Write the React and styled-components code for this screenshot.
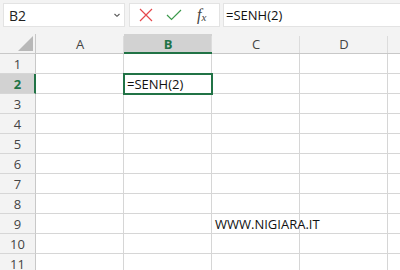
import React from "react";
import styled, { createGlobalStyle } from "styled-components";

const Global = createGlobalStyle`
  html, body { margin: 0; padding: 0; background: #ffffff; }
  body { width: 400px; height: 270px; overflow: hidden; }
  * { box-sizing: border-box; }
`;

const GREEN = "#217346";
const GRID = "#d6d6d6";
const HEAD_BG = "#f3f3f3";
const SEL_BG = "#d2d2d2";

const Page = styled.div`
  width: 400px;
  height: 270px;
  overflow: hidden;
  background: ${HEAD_BG};
  font-family: "Open Sans", "Noto Sans", sans-serif;
`;

const Toolbar = styled.div`
  height: 34px;
  display: flex;
  align-items: flex-start;
  padding: 3px 0 0 3px;
  gap: 4px;
`;

const NameBox = styled.div`
  width: 122px;
  height: 24px;
  background: #fff;
  border: 1px solid #e3e3e3;
  display: flex;
  align-items: center;
  justify-content: space-between;
  padding: 0 3px 0 5px;
  font-size: 14px;
  color: #222;
`;

const Buttons = styled.div`
  width: 91px;
  height: 24px;
  background: #fff;
  border: 1px solid #e3e3e3;
  display: flex;
  align-items: center;
  padding-left: 9px;
  gap: 13px;
`;

const Fx = styled.span`
  font-family: "Liberation Serif", "DejaVu Serif", serif;
  font-style: italic;
  font-size: 16px;
  color: #444;
  margin-left: 2px;
  line-height: 1;
  sub {
    font-size: 11px;
    vertical-align: baseline;
    position: relative;
    top: 1px;
  }
`;

const FormulaInput = styled.div`
  flex: 1;
  height: 24px;
  margin-left: -1px;
  background: #fff;
  border: 1px solid #e3e3e3;
  border-right: none;
  display: flex;
  align-items: center;
  padding-left: 2px;
  font-size: 13px;
  color: #111;
`;

const Sheet = styled.div`
  display: grid;
  grid-template-columns: 36px repeat(4, 88px) 1fr;
  grid-template-rows: 20px repeat(11, 20px);
  background: #fff;
`;

const Corner = styled.div`
  background: ${HEAD_BG};
  border-right: 1px solid #c8c8c8;
  border-bottom: 1px solid #c8c8c8;
  display: flex;
  align-items: flex-end;
  justify-content: flex-end;
  padding: 0 2px 2px 0;
`;

const ColHead = styled.div`
  background: ${(p) => (p.$sel ? SEL_BG : HEAD_BG)};
  border-bottom: ${(p) => (p.$sel ? `2px solid ${GREEN}` : "1px solid #c8c8c8")};
  position: relative;
  display: flex;
  align-items: center;
  justify-content: center;
  font-size: 13px;
  padding-top: ${(p) => (p.$sel ? "1px" : "0")};
  color: ${(p) => (p.$sel ? GREEN : "#444")};
  font-weight: ${(p) => (p.$sel ? 700 : 400)};
  &::after {
    content: "";
    position: absolute;
    right: 0;
    top: 2px;
    bottom: 0;
    width: 1px;
    background: #dcdcdc;
  }
`;

const RowHead = styled.div`
  background: ${(p) => (p.$sel ? SEL_BG : HEAD_BG)};
  border-right: ${(p) => (p.$sel ? `2px solid ${GREEN}` : "1px solid #c8c8c8")};
  border-bottom: 1px solid ${GRID};
  display: flex;
  align-items: center;
  justify-content: center;
  padding-left: ${(p) => (p.$sel ? "1px" : "0")};
  font-size: 13px;
  color: ${(p) => (p.$sel ? GREEN : "#444")};
  font-weight: ${(p) => (p.$sel ? 700 : 400)};
`;

const Cell = styled.div`
  border-right: 1px solid ${GRID};
  border-bottom: 1px solid ${GRID};
  position: relative;
  display: flex;
  align-items: center;
  padding-left: 3px;
  font-size: 13px;
  color: #111;
  white-space: nowrap;
  overflow: visible;
  z-index: ${(p) => (p.$active ? 2 : "auto")};
  ${(p) =>
    p.$active &&
    `
    &::after {
      content: "";
      position: absolute;
      left: -1px;
      top: -1px;
      right: -2px;
      bottom: -2px;
      border: 2px solid ${GREEN};
      pointer-events: none;
    }
  `}
`;

const CellText = styled.span`
  position: relative;
  z-index: 3;
`;

const TailCell = styled.div`
  border-bottom: 1px solid ${GRID};
`;

const TailHead = styled.div`
  background: ${HEAD_BG};
  border-bottom: 1px solid #c8c8c8;
`;

const cols = ["A", "B", "C", "D"];
const rows = Array.from({ length: 11 }, (_, i) => i + 1);

const content = {
  B2: "=SENH(2)",
  C9: "WWW.NIGIARA.IT",
};

export default function App() {
  return (
    <Page>
      <Global />
      <Toolbar>
        <NameBox>
          <span>B2</span>
          <svg width="8" height="6" viewBox="0 0 8 6">
            <path d="M1.5 2 L4 4.3 L6.5 2" fill="none" stroke="#555" strokeWidth="1.1" />
          </svg>
        </NameBox>
        <Buttons>
          <svg width="14" height="14" viewBox="0 0 14 14">
            <path d="M1 1 L13 13 M13 1 L1 13" stroke="#e5484d" strokeWidth="1.2" fill="none" />
          </svg>
          <svg width="16" height="12" viewBox="0 0 16 12">
            <path d="M1 6 L5.5 10.5 L15 1" stroke="#3c9a4c" strokeWidth="1.2" fill="none" />
          </svg>
          <Fx>
            f<sub>x</sub>
          </Fx>
        </Buttons>
        <FormulaInput>=SENH(2)</FormulaInput>
      </Toolbar>
      <Sheet>
        <Corner>
          <svg width="15" height="15" viewBox="0 0 15 15">
            <path d="M15 0 L15 15 L0 15 Z" fill="#b8b8b8" />
          </svg>
        </Corner>
        {cols.map((c) => (
          <ColHead key={c} $sel={c === "B"}>
            {c}
          </ColHead>
        ))}
        <TailHead />
        {rows.map((r) => (
          <React.Fragment key={r}>
            <RowHead $sel={r === 2}>{r}</RowHead>
            {cols.map((c) => {
              const id = c + r;
              return (
                <Cell key={id} $active={id === "B2"}>
                  {content[id] && <CellText>{content[id]}</CellText>}
                </Cell>
              );
            })}
            <TailCell />
          </React.Fragment>
        ))}
      </Sheet>
    </Page>
  );
}
